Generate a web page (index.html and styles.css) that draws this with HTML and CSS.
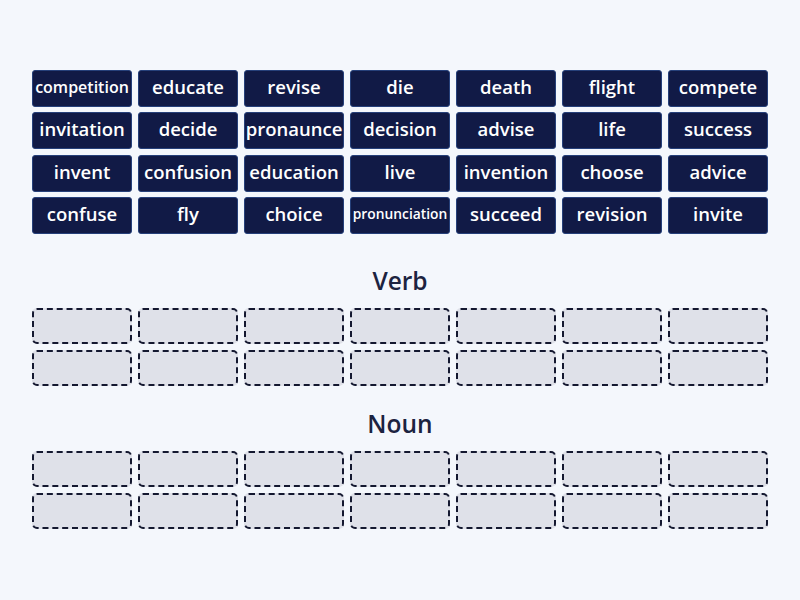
FILE: index.html
```html
<!DOCTYPE html>
<html>
<head>
<meta charset="utf-8">
<link rel="stylesheet" href="styles.css">
</head>
<body>
<div class="page">
  <div class="grid tiles">
    <div class="tile small">competition</div>
    <div class="tile">educate</div>
    <div class="tile">revise</div>
    <div class="tile">die</div>
    <div class="tile">death</div>
    <div class="tile">flight</div>
    <div class="tile">compete</div>
    <div class="tile">invitation</div>
    <div class="tile">decide</div>
    <div class="tile">pronaunce</div>
    <div class="tile">decision</div>
    <div class="tile">advise</div>
    <div class="tile">life</div>
    <div class="tile">success</div>
    <div class="tile">invent</div>
    <div class="tile">confusion</div>
    <div class="tile">education</div>
    <div class="tile">live</div>
    <div class="tile">invention</div>
    <div class="tile">choose</div>
    <div class="tile">advice</div>
    <div class="tile">confuse</div>
    <div class="tile">fly</div>
    <div class="tile">choice</div>
    <div class="tile xsmall">pronunciation</div>
    <div class="tile">succeed</div>
    <div class="tile">revision</div>
    <div class="tile">invite</div>
  </div>

  <h2 class="group-title first">Verb</h2>
  <div class="grid slots">
    <div class="slot"></div><div class="slot"></div><div class="slot"></div><div class="slot"></div><div class="slot"></div><div class="slot"></div><div class="slot"></div>
    <div class="slot"></div><div class="slot"></div><div class="slot"></div><div class="slot"></div><div class="slot"></div><div class="slot"></div><div class="slot"></div>
  </div>

  <h2 class="group-title">Noun</h2>
  <div class="grid slots">
    <div class="slot"></div><div class="slot"></div><div class="slot"></div><div class="slot"></div><div class="slot"></div><div class="slot"></div><div class="slot"></div>
    <div class="slot"></div><div class="slot"></div><div class="slot"></div><div class="slot"></div><div class="slot"></div><div class="slot"></div><div class="slot"></div>
  </div>
</div>
</body>
</html>
```

FILE: styles.css
```css
html, body {
  margin: 0;
  padding: 0;
  background: #f4f7fc;
  font-family: "Open Sans", "Noto Sans", sans-serif;
}
.page {
  width: 736px;
  padding: 70px 0 0 32px;
}
.grid {
  display: grid;
  grid-template-columns: repeat(7, 1fr);
  column-gap: 6px;
}
.tiles {
  row-gap: 5.33px;
}
.tile {
  height: 37px;
  box-sizing: border-box;
  padding-bottom: 4px;
  background: #111a46;
  border: 1px solid #26407a;
  border-radius: 3px;
  color: #ffffff;
  font-weight: 600;
  font-size: 18.5px;
  display: flex;
  align-items: center;
  justify-content: center;
  white-space: nowrap;
}
.tile.small { font-size: 16px; }
.tile.xsmall { font-size: 13.8px; }
.group-title {
  margin: 32px 0 12px;
  height: 30px;
  line-height: 30px;
  text-align: center;
  font-size: 24.5px;
  font-weight: 600;
  color: #1c2340;
}
.group-title:not(.first) { margin-top: 23px; }
.slots {
  row-gap: 6px;
}
.slot {
  height: 36px;
  box-sizing: border-box;
  background: #dfe1e9;
  border: 2px dashed #141830;
  border-radius: 5px;
}
```
